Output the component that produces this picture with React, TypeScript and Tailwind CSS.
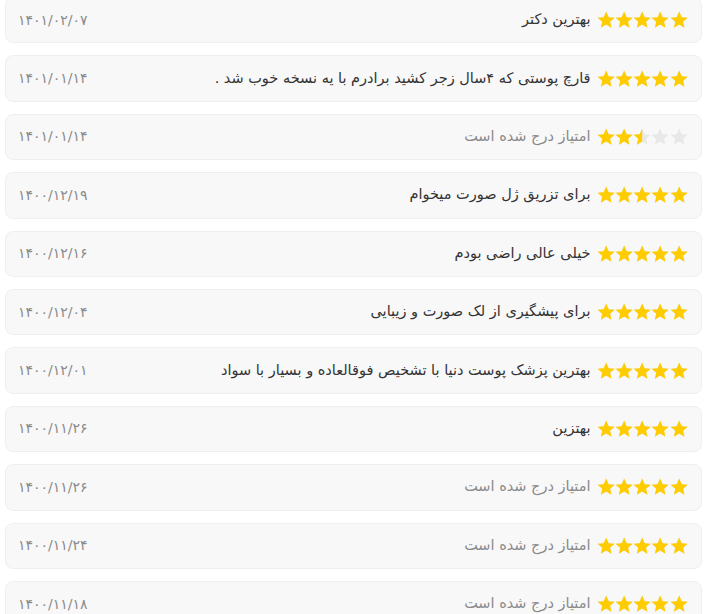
const reviews = [
  { date: '۱۴۰۱/۰۲/۰۷', rate: 5, text: 'بهترین دکتر' },
  { date: '۱۴۰۱/۰۱/۱۴', rate: 5, text: 'قارچ پوستی که ۴سال زجر کشید برادرم با یه نسخه خوب شد .' },
  { date: '۱۴۰۱/۰۱/۱۴', rate: 2.5, text: '' },
  { date: '۱۴۰۰/۱۲/۱۹', rate: 5, text: 'برای تزریق ژل صورت میخوام' },
  { date: '۱۴۰۰/۱۲/۱۶', rate: 5, text: 'خیلی عالی راضی بودم' },
  { date: '۱۴۰۰/۱۲/۰۴', rate: 5, text: 'برای پیشگیری از لک صورت و زیبایی' },
  { date: '۱۴۰۰/۱۲/۰۱', rate: 5, text: 'بهترین پزشک پوست دنیا با تشخیص فوقالعاده و بسیار با سواد' },
  { date: '۱۴۰۰/۱۱/۲۶', rate: 5, text: 'بهتزین' },
  { date: '۱۴۰۰/۱۱/۲۶', rate: 5, text: '' },
  { date: '۱۴۰۰/۱۱/۲۴', rate: 5, text: '' },
  { date: '۱۴۰۰/۱۱/۱۸', rate: 5, text: '' },
];

const STAR = 'M9 0.6l2.5 5.6 6.05.55-4.6 4 1.36 5.95L9 13.6 3.69 16.7 5.05 10.75.45 6.75l6.05-.55z';

function Star({ fill, id }: { fill: number; id: string }) {
  // stars read left to right, so a part star is filled from its left edge
  return (
    <svg width="18.3" height="18" viewBox="0 0 18 18" className="block">
      <defs>
        <clipPath id={id}>
          <rect x="0" y="0" width={18 * fill} height="18" />
        </clipPath>
      </defs>
      <path d={STAR} fill="#e8e8e8" />
      {fill > 0 && <path d={STAR} fill="#ffcc00" clipPath={`url(#${id})`} />}
    </svg>
  );
}

function Stars({ rate, row }: { rate: number; row: number }) {
  return (
    <div dir="ltr" className="flex items-center shrink-0">
      {[1, 2, 3, 4, 5].map((n) => (
        <Star key={n} id={`s${row}-${n}`} fill={Math.max(0, Math.min(1, rate - (n - 1)))} />
      ))}
    </div>
  );
}

export default function App() {
  return (
    <div
      dir="rtl"
      className="bg-white w-[715px] h-[614px] overflow-hidden"
      style={{ fontFamily: '"DejaVu Sans", "Noto Sans", sans-serif' }}
    >
      <div className="flex flex-col gap-3 -mt-[3px] mr-[13px] ml-[5px]">
        {reviews.map((r, i) => (
          <div
            key={i}
            className="h-[46.4px] shrink-0 flex items-center justify-between rounded-lg border border-[#efefef] bg-[#f8f8f8] pr-[13px] pl-[12px]"
          >
            <div className="flex items-center gap-[6px]">
              <Stars rate={r.rate} row={i} />
              {r.text ? (
                <span className="text-[14.5px] text-[#333]">{r.text}</span>
              ) : (
                <span className="text-[14.5px] text-[#8a8a8a]">امتیاز درج شده است</span>
              )}
            </div>
            <span dir="ltr" className="text-[14px] text-[#8a8a8a]">{r.date}</span>
          </div>
        ))}
      </div>
    </div>
  );
}
